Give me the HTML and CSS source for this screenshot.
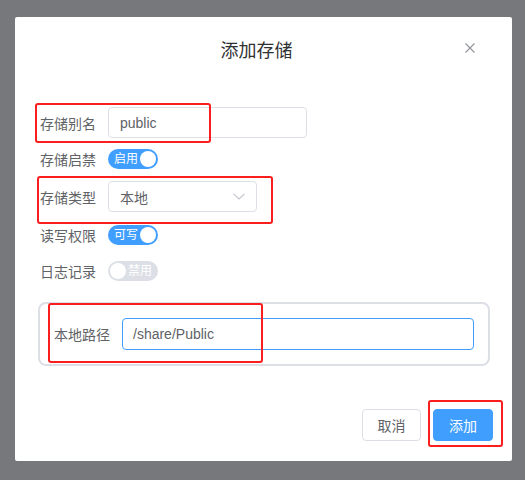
FILE: index.html
```html
<!DOCTYPE html>
<html lang="zh">
<head>
<meta charset="utf-8">
<link rel="stylesheet" href="styles.css">
</head>
<body>
<div class="dialog">
  <div class="header">
    <span class="title">添加存储</span>
    <svg class="close" width="10" height="10" viewBox="0 0 10 10"><path d="M0.5 0.5L9.5 9.5M9.5 0.5L0.5 9.5" stroke="#909399" stroke-width="1.1" fill="none"/></svg>
  </div>
  <div class="body">
    <div class="row r1">
      <span class="label">存储别名</span>
      <div class="input w1">public</div>
    </div>
    <div class="row r2">
      <span class="label">存储启禁</span>
      <div class="switch on"><span class="stext">启用</span><span class="knob"></span></div>
    </div>
    <div class="row r3">
      <span class="label">存储类型</span>
      <div class="input select">本地
        <svg width="12" height="7" viewBox="0 0 12 7"><path d="M0.5 0.8L6 6L11.5 0.8" stroke="#c0c4cc" stroke-width="1.1" fill="none"/></svg>
      </div>
    </div>
    <div class="row r4">
      <span class="label">读写权限</span>
      <div class="switch on"><span class="stext">可写</span><span class="knob"></span></div>
    </div>
    <div class="row r5">
      <span class="label">日志记录</span>
      <div class="switch off"><span class="knob"></span><span class="stext">禁用</span></div>
    </div>
    <div class="group">
      <span class="label glabel">本地路径</span>
      <div class="input focus">/share/Public</div>
    </div>
  </div>
  <div class="footer">
    <button class="btn">取消</button>
    <button class="btn primary">添加</button>
  </div>
  <div class="mark m1"></div>
  <div class="mark m2"></div>
  <div class="mark m3"></div>
  <div class="mark m4"></div>
</div>
</body>
</html>
```
FILE: styles.css
```css
html, body {
  margin: 0;
  padding: 0;
  background: #76787c;
  width: 525px;
  height: 480px;
  overflow: hidden;
  font-family: "Liberation Sans", "Noto Sans CJK SC", sans-serif;
}
.dialog {
  position: relative;
  width: 497px;
  height: 444px;
  margin: 17px 0 0 15px;
  background: #fff;
  border-radius: 2px;
  box-sizing: border-box;
}
.header {
  position: relative;
  height: 64px;
  display: flex;
  align-items: center;
  justify-content: center;
  padding-right: 14px;
}
.title {
  font-size: 18px;
  color: #303133;
}
.close {
  position: absolute;
  right: 37px;
  top: 26px;
}
.body {
  padding: 26px 0 0 25px;
}
.row {
  display: flex;
  align-items: center;
}
.label {
  width: 68px;
  font-size: 14px;
  color: #606266;
  flex: none;
}
.r1 { height: 31px; }
.r2 { height: 20px; margin-top: 11px; }
.r3 { height: 31px; margin-top: 12px; }
.r4 { height: 20px; margin-top: 13px; }
.r5 { height: 20px; margin-top: 16px; }
.input {
  box-sizing: border-box;
  height: 31px;
  border: 1px solid #dcdfe6;
  border-radius: 4px;
  padding: 0 11px;
  font-size: 14px;
  color: #606266;
  display: flex;
  align-items: center;
}
.w1 { width: 199px; }
.select {
  width: 149px;
  justify-content: space-between;
}
.switch {
  box-sizing: border-box;
  width: 50px;
  height: 20px;
  border-radius: 10px;
  display: flex;
  align-items: center;
  padding: 0 2px;
  font-size: 12px;
  color: #fff;
}
.switch.on {
  background: #409eff;
  justify-content: space-between;
  padding-left: 6px;
}
.switch.off {
  background: #dcdfe6;
  justify-content: space-between;
  padding-right: 6px;
}
.knob {
  width: 16px;
  height: 16px;
  border-radius: 50%;
  background: #fff;
  flex: none;
}
.stext { line-height: 1; }
.group {
  box-sizing: border-box;
  width: 452px;
  height: 64px;
  margin: 21px 0 0 -2px;
  border: 2px solid #dcdfe6;
  border-radius: 8px;
  display: flex;
  align-items: center;
  padding: 0 14px 0 14px;
}
.glabel { width: 68px; }
.focus {
  flex: 1;
  height: 32px;
  border-color: #409eff;
  padding-left: 10px;
}
.footer {
  display: flex;
  justify-content: flex-end;
  gap: 12px;
  margin-top: 43px;
  padding-right: 19px;
}
.btn {
  box-sizing: border-box;
  height: 32px;
  width: 59px;
  border: 1px solid #dcdfe6;
  border-radius: 4px;
  background: #fff;
  color: #606266;
  font-size: 14px;
  font-family: "Liberation Sans", "Noto Sans CJK SC", sans-serif;
  padding: 0;
}
.btn.primary {
  width: 60px;
  background: #409eff;
  border-color: #409eff;
  color: #fff;
}
.mark {
  position: absolute;
  box-sizing: border-box;
  border: 2px solid #fa1e1e;
  border-radius: 3px;
}
.m1 { left: 20px; top: 86px; width: 176px; height: 40px; }
.m2 { left: 22px; top: 159px; width: 236px; height: 48px; }
.m3 { left: 33px; top: 286px; width: 215px; height: 60px; }
.m4 { left: 413px; top: 383px; width: 75px; height: 47px; }
```
